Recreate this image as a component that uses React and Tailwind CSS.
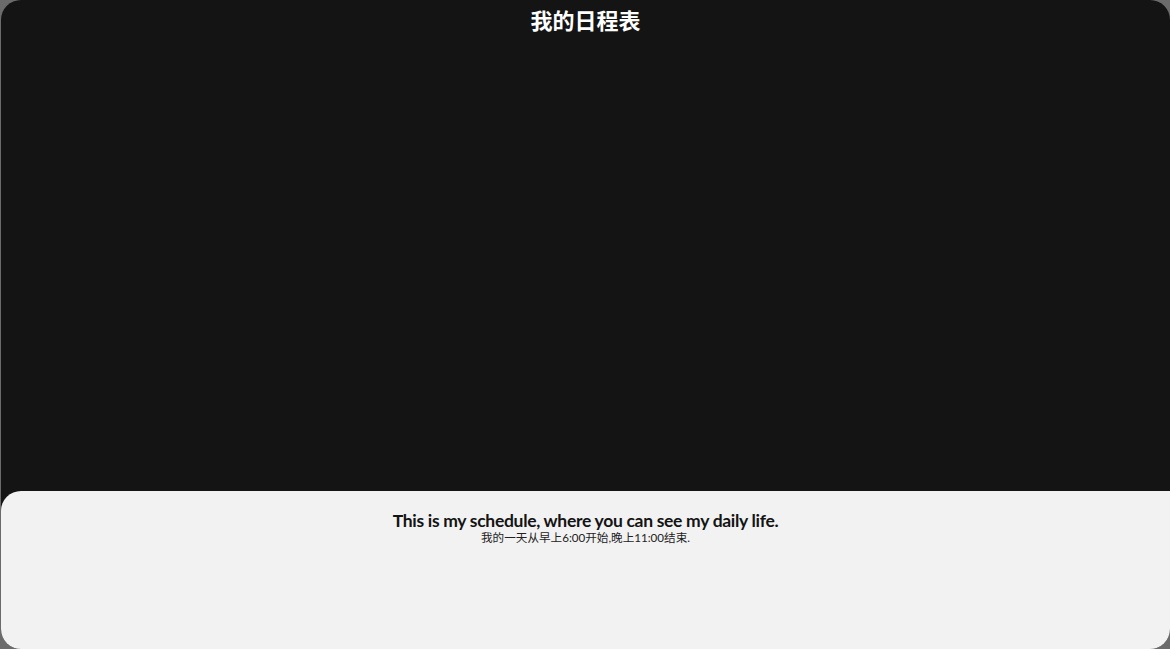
import React from "react";

const cjk = "font-['Lato','Noto_Sans_CJK_SC',sans-serif]";

export default function App() {
  return (
    <div className="h-[649px] w-full bg-[#6b6b6b] pl-px overflow-hidden">
      <div className="flex h-full flex-col rounded-[20px] bg-[#141414] overflow-hidden">
        {/* Header */}
        <div className="h-[491px] pt-[5px] text-center">
          <h1 className={`${cjk} text-[22px] font-bold leading-[32px] text-white`}>我的日程表</h1>
        </div>

        {/* Footer */}
        <div className="flex-1 rounded-tl-[20px] bg-[#f2f2f2] pt-[19px] text-center text-[#141414]">
          <p className="font-['Lato',sans-serif] text-[17.5px] font-bold leading-[22px] tracking-[-0.3px]">
            This is my schedule, where you can see my daily life.
          </p>
          <p className={`${cjk} text-[11.6px] leading-[11px] text-[#222]`}>
            我的一天从早上6:00开始,晚上11:00结束.
          </p>
        </div>
      </div>
    </div>
  );
}
